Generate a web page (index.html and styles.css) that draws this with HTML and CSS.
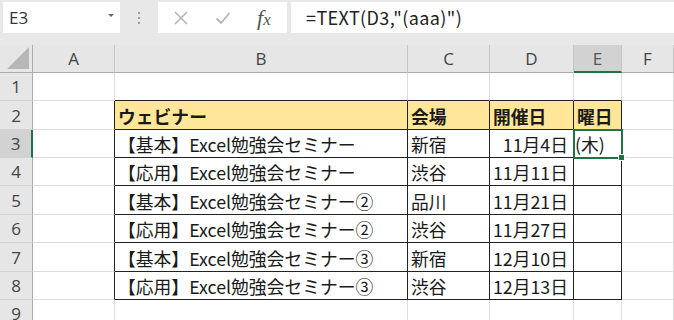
FILE: index.html
```html
<!DOCTYPE html>
<html>
<head>
    <title>Excel TEXT関数</title>
    <link rel="stylesheet" href="styles.css">
</head>
<body>
    <div class="toolbar">
        <div class="namebox">
            <span>E3</span>
            <span class="caret"></span>
        </div>
        <div class="grip"><i></i><i></i><i></i></div>
        <div class="fnbox">
            <svg width="16" height="16" viewBox="0 0 16 16"><path d="M2 2 L14 14 M14 2 L2 14" stroke="#b4b4b4" stroke-width="1.6" fill="none"/></svg>
            <svg width="16" height="16" viewBox="0 0 16 16"><path d="M1.5 8.5 L6 13 L14.5 3" stroke="#b4b4b4" stroke-width="1.8" fill="none"/></svg>
            <span class="fx">f<small>x</small></span>
        </div>
        <div class="formula">=TEXT(D3,"(aaa)")</div>
    </div>

    <div class="sheet">
        <div class="c hd corner"><span class="tri"></span></div>
        <div class="c hd">A</div>
        <div class="c hd">B</div>
        <div class="c hd">C</div>
        <div class="c hd">D</div>
        <div class="c hd active">E</div>
        <div class="c hd">F</div>

        <div class="c rh">1</div>
        <div class="c"></div>
        <div class="c tt"></div>
        <div class="c tt"></div>
        <div class="c tt"></div>
        <div class="c tt"></div>
        <div class="c"></div>

        <div class="c rh">2</div>
        <div class="c tl"></div>
        <div class="c t th">ウェビナー</div>
        <div class="c t th">会場</div>
        <div class="c t th">開催日</div>
        <div class="c t th">曜日</div>
        <div class="c"></div>

        <div class="c rh active">3</div>
        <div class="c tl"></div>
        <div class="c t">【基本】Excel勉強会セミナー</div>
        <div class="c t">新宿</div>
        <div class="c t num">11月4日</div>
        <div class="c t sel">(木)</div>
        <div class="c"></div>

        <div class="c rh">4</div>
        <div class="c tl"></div>
        <div class="c t">【応用】Excel勉強会セミナー</div>
        <div class="c t">渋谷</div>
        <div class="c t num">11月11日</div>
        <div class="c t"></div>
        <div class="c"></div>

        <div class="c rh">5</div>
        <div class="c tl"></div>
        <div class="c t">【基本】Excel勉強会セミナー②</div>
        <div class="c t">品川</div>
        <div class="c t num">11月21日</div>
        <div class="c t"></div>
        <div class="c"></div>

        <div class="c rh">6</div>
        <div class="c tl"></div>
        <div class="c t">【応用】Excel勉強会セミナー②</div>
        <div class="c t">渋谷</div>
        <div class="c t num">11月27日</div>
        <div class="c t"></div>
        <div class="c"></div>

        <div class="c rh">7</div>
        <div class="c tl"></div>
        <div class="c t">【基本】Excel勉強会セミナー③</div>
        <div class="c t">新宿</div>
        <div class="c t num">12月10日</div>
        <div class="c t"></div>
        <div class="c"></div>

        <div class="c rh">8</div>
        <div class="c tl"></div>
        <div class="c t">【応用】Excel勉強会セミナー③</div>
        <div class="c t">渋谷</div>
        <div class="c t num">12月13日</div>
        <div class="c t"></div>
        <div class="c"></div>

        <div class="c rh">9</div>
        <div class="c"></div>
        <div class="c"></div>
        <div class="c"></div>
        <div class="c"></div>
        <div class="c"></div>
        <div class="c"></div>
    </div>
</body>
</html>
```
FILE: styles.css
```css
body {
    margin: 0;
    width: 674px;
    height: 320px;
    overflow: hidden;
    background: #fff;
    font-family: "Noto Sans CJK JP", sans-serif;
}

.toolbar {
    display: flex;
    align-items: flex-start;
    height: 45px;
    padding: 2px 0 0 3px;
    box-sizing: border-box;
    background: #e8e8e8;
}
.namebox {
    display: flex;
    align-items: center;
    justify-content: space-between;
    width: 117px;
    height: 31px;
    padding: 0 6px 0 6px;
    box-sizing: border-box;
    background: #fff;
    font-family: "Open Sans", sans-serif;
    font-size: 17px;
    color: #333;
}
.caret {
    width: 0;
    height: 0;
    border-left: 3px solid transparent;
    border-right: 3px solid transparent;
    border-top: 3px solid #666;
    margin-top: -4px;
}
.grip {
    width: 38px;
    height: 31px;
    display: flex;
    flex-direction: column;
    align-items: center;
    justify-content: center;
    gap: 3px;
}
.grip i {
    width: 2px;
    height: 2px;
    background: #9a9a9a;
}
.fnbox {
    display: flex;
    align-items: center;
    width: 129px;
    height: 31px;
    padding: 0 0 0 15px;
    gap: 26px;
    box-sizing: border-box;
    background: #fff;
    margin-right: 4px;
}
.fx {
    font-family: "Liberation Serif", serif;
    font-style: italic;
    font-size: 22px;
    color: #555;
    margin-left: 0;
}
.fx small {
    font-size: 17px;
}
.formula {
    flex: 1;
    height: 31px;
    line-height: 31px;
    padding-left: 15px;
    background: #fff;
    font-size: 18px;
    letter-spacing: 0.4px;
    color: #222;
    white-space: nowrap;
}

.sheet {
    display: grid;
    grid-template-columns: 33px 82px 293px 82px 84px 48px 52px;
    grid-template-rows: 28px 28px 29px 28px 28px 29px 28px 29px 28px 28px;
}
.c {
    display: flex;
    align-items: center;
    padding: 1px 0 0 3px;
    box-sizing: border-box;
    border-right: 1px solid #dcdcdc;
    border-bottom: 1px solid #dcdcdc;
    font-size: 17.8px;
    color: #1a1a1a;
    white-space: nowrap;
    overflow: hidden;
}

.hd {
    justify-content: center;
    padding: 0;
    background: #e6e6e6;
    border-right: 1px solid #c6c6c6;
    border-bottom: 1px solid #ababab;
    font-family: "Open Sans", sans-serif;
    font-size: 17px;
    color: #444;
}
.corner {
    justify-content: flex-end;
    align-items: flex-end;
    padding: 0 3px 3px 0;
    border-right-color: #ababab;
}
.tri {
    width: 0;
    height: 0;
    border-left: 22px solid transparent;
    border-bottom: 22px solid #b7b7b7;
}
.rh {
    justify-content: center;
    padding: 0;
    background: #e6e6e6;
    border-right: 1px solid #ababab;
    border-bottom: 1px solid #d2d2d2;
    font-family: "Open Sans", sans-serif;
    font-size: 17px;
    color: #444;
}
.hd.active {
    background: #d2d2d2;
    border-bottom: 2px solid #217346;
    color: #555;
}
.rh.active {
    background: #d2d2d2;
    border-right: 2px solid #217346;
}

.tt {
    border-bottom-color: #222;
}
.tl {
    border-right-color: #222;
}
.t {
    border-right-color: #222;
    border-bottom-color: #222;
}
.th {
    background: #ffe699;
    font-weight: bold;
}
.num {
    justify-content: flex-end;
    padding-right: 5px;
}
.sel {
    position: relative;
    overflow: visible;
    padding-left: 1px;
    outline: 2px solid #217346;
    outline-offset: -1px;
}
.sel::after {
    content: "";
    position: absolute;
    right: -4px;
    bottom: -4px;
    width: 5px;
    height: 5px;
    background: #217346;
    border: 1px solid #fff;
}
```
